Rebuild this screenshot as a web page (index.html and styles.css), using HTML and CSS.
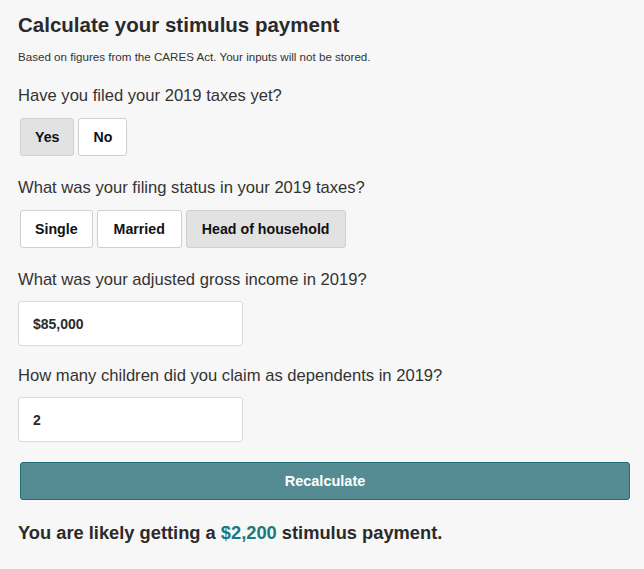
FILE: index.html
```html
<!DOCTYPE html>
<html>
<head>
<meta charset="utf-8">
<link rel="stylesheet" href="styles.css">
</head>
<body>
<div class="calc">
  <h1 class="title">Calculate your stimulus payment</h1>
  <p class="note">Based on figures from the CARES Act. Your inputs will not be stored.</p>

  <p class="question q-first">Have you filed your 2019 taxes yet?</p>
  <div class="choices">
    <button class="choice narrow active">Yes</button>
    <button class="choice narrow">No</button>
  </div>

  <p class="question">What was your filing status in your 2019 taxes?</p>
  <div class="choices">
    <button class="choice narrow">Single</button>
    <button class="choice wide">Married</button>
    <button class="choice active">Head of household</button>
  </div>

  <p class="question">What was your adjusted gross income in 2019?</p>
  <div class="field">$85,000</div>

  <p class="question q-after-field">How many children did you claim as dependents in 2019?</p>
  <div class="field">2</div>

  <button class="recalc">Recalculate</button>

  <p class="result">You are likely getting a <span class="amount">$2,200</span> stimulus payment.</p>
</div>
</body>
</html>
```

FILE: styles.css
```css
html, body {
  margin: 0;
  padding: 0;
  background: #f7f7f7;
}
body {
  font-family: "Liberation Sans", Arial, sans-serif;
  color: #2a2a2a;
}
.calc {
  padding: 13px 0 0 18px;
  width: 613px;
}
.title {
  margin: 0;
  font-size: 20.5px;
  line-height: 24px;
  font-weight: 700;
  color: #2a2a2a;
}
.note {
  margin: 12px 0 0;
  font-size: 11.6px;
  line-height: 16px;
  color: #333;
}
.question {
  margin: 22px 0 0;
  font-size: 16.6px;
  line-height: 20px;
  color: #333;
}
.q-first {
  margin-top: 21px;
}
.q-after-field {
  margin-top: 20px;
}
.choices {
  display: flex;
  gap: 4px;
  margin: 12px 0 0 2px;
}
.choice {
  height: 38px;
  padding: 0 15px;
  border: 1px solid #cfcfcf;
  border-radius: 3px;
  background: #fff;
  font-family: "Liberation Sans", Arial, sans-serif;
  font-size: 14.2px;
  font-weight: 700;
  color: #111;
  cursor: pointer;
}
.choice.narrow {
  padding: 0 14px;
}
.choice.wide {
  padding: 0 16px;
}
.choice.active {
  background: #e2e2e2;
}
.field {
  box-sizing: border-box;
  width: 225px;
  height: 45px;
  margin-top: 11px;
  padding: 0 14px;
  display: flex;
  align-items: center;
  background: #fff;
  border: 1px solid #dadada;
  border-radius: 3px;
  font-size: 14px;
  font-weight: 700;
  color: #2a2a2a;
}
.recalc {
  display: block;
  box-sizing: border-box;
  width: 610px;
  height: 38px;
  margin: 20px 0 0 2px;
  background: #558c93;
  border: 1px solid #1f6d75;
  border-radius: 3px;
  color: #fff;
  font-family: "Liberation Sans", Arial, sans-serif;
  font-size: 14.5px;
  font-weight: 700;
}
.result {
  margin: 23px 0 0;
  font-size: 18.3px;
  line-height: 20px;
  font-weight: 700;
  color: #2a2a2a;
}
.amount {
  color: #1b7880;
}
```
